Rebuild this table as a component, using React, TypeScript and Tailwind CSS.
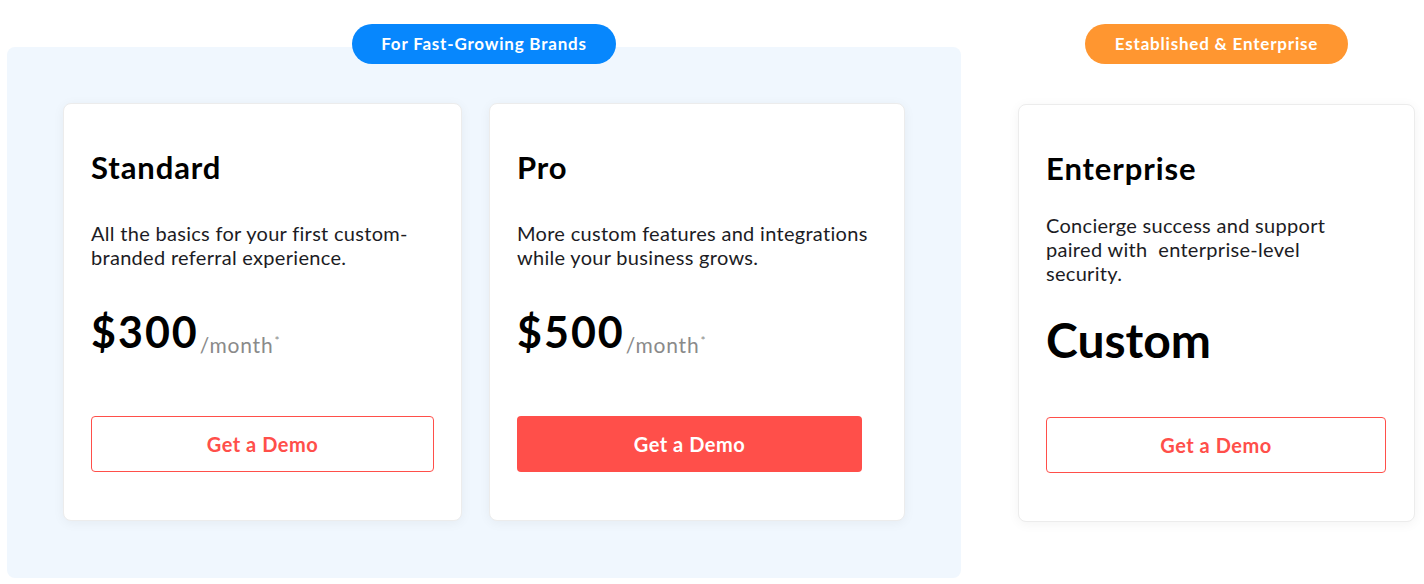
import React from "react";

const font = { fontFamily: "Lato, 'Open Sans', sans-serif" };

function Card({
  title,
  desc,
  price,
  custom,
  filled,
  width,
  pr,
  descClass,
}: {
  title: string;
  desc: React.ReactNode;
  price?: string;
  custom?: boolean;
  filled?: boolean;
  width: string;
  pr: string;
  descClass?: string;
}) {
  return (
    <div
      className={`${width} ${pr} h-[418px] bg-white rounded-lg border border-[#ececec] shadow-[0_2px_12px_rgba(0,0,0,0.05)] flex flex-col pl-[27px] pt-[45px] pb-[48px]`}
    >
      <h2 className="text-[31px] leading-[36px] font-bold tracking-[0.9px] text-black">{title}</h2>
      <p className={`${descClass ?? "mt-[36px]"} whitespace-nowrap text-[20px] leading-[24px] tracking-[0.3px] text-[#1c1c24] font-normal`}>{desc}</p>
      {custom ? (
        <div className="mt-[30px] text-[48px] leading-[50px] font-bold text-black">Custom</div>
      ) : (
        <div className="mt-[38px] flex items-baseline">
          <span className="text-[43px] leading-[50px] font-bold tracking-[2px] text-black">{price}</span>
          <span className="relative top-[5px] ml-[1px] text-[21px] tracking-[0.8px] text-[#8a8a8a]">
            /month<span className="relative -top-[8px] text-[12px] ml-[1px] tracking-normal">*</span>
          </span>
        </div>
      )}
      <div className="mt-auto">
        <button
          className={`w-full h-[56px] rounded-[4px] text-[20px] tracking-[0.5px] font-bold ${
            filled ? "bg-[#ff4f4a] text-white" : "border border-[#ff4f4a] text-[#ff4f4a] bg-white"
          }`}
        >
          Get a Demo
        </button>
      </div>
    </div>
  );
}

export default function App() {
  return (
    <div className="w-[1424px] h-[584px] bg-white flex pt-[24px] pl-[7px]" style={font}>
      <div className="flex flex-col items-center w-[954px]">
        <div className="relative z-10 h-[40px] w-[264px] justify-center rounded-full bg-[#0787fd] text-white text-[17px] tracking-[0.8px] font-bold flex items-center">
          For Fast-Growing Brands
        </div>
        <div className="-mt-[17px] w-full h-[531px] bg-[#f0f7fe] rounded-lg pt-[56px] px-[56px] flex gap-[27px]">
          <Card
            width="w-[399px]"
            pr="pr-[27px]"
            title="Standard"
            desc={<>All the basics for your first custom-<br />branded referral experience.</>}
            price="$300"
          />
          <Card
            width="w-[416px]"
            pr="pr-[42px]"
            title="Pro"
            filled
            desc={<>More custom features and integrations<br />while your business grows.</>}
            price="$500"
          />
        </div>
      </div>
      <div className="ml-[57px] flex flex-col items-center w-[397px]">
        <div className="h-[40px] w-[263px] justify-center rounded-full bg-[#ff9630] text-white text-[17px] tracking-[0.8px] font-bold flex items-center">
          Established &amp; Enterprise
        </div>
        <div className="mt-[40px]">
          <Card
            width="w-[397px]"
            pr="pr-[28px]"
            title="Enterprise"
            custom
            descClass="mt-[27px]"
            desc={<>Concierge success and support<br />paired with&nbsp; enterprise-level<br />security.</>}
          />
        </div>
      </div>
    </div>
  );
}
